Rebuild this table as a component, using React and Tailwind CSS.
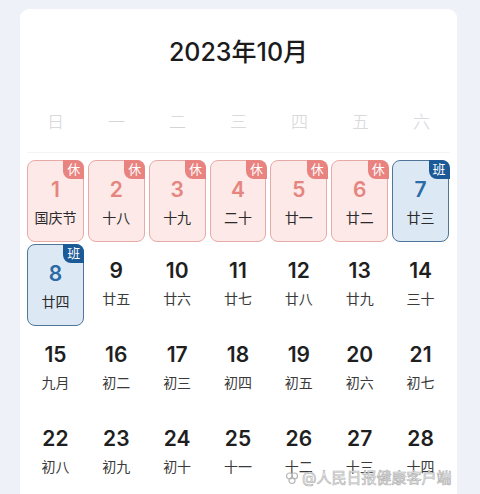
import React from 'react';

const weekdays = ['日', '一', '二', '三', '四', '五', '六'];

// type: rest = 休, work = 班
const days = [
  { d: 1, l: '国庆节', t: 'rest' },
  { d: 2, l: '十八', t: 'rest' },
  { d: 3, l: '十九', t: 'rest' },
  { d: 4, l: '二十', t: 'rest' },
  { d: 5, l: '廿一', t: 'rest' },
  { d: 6, l: '廿二', t: 'rest' },
  { d: 7, l: '廿三', t: 'work' },
  { d: 8, l: '廿四', t: 'work' },
  { d: 9, l: '廿五' },
  { d: 10, l: '廿六' },
  { d: 11, l: '廿七' },
  { d: 12, l: '廿八' },
  { d: 13, l: '廿九' },
  { d: 14, l: '三十' },
  { d: 15, l: '九月' },
  { d: 16, l: '初二' },
  { d: 17, l: '初三' },
  { d: 18, l: '初四' },
  { d: 19, l: '初五' },
  { d: 20, l: '初六' },
  { d: 21, l: '初七' },
  { d: 22, l: '初八' },
  { d: 23, l: '初九' },
  { d: 24, l: '初十' },
  { d: 25, l: '十一' },
  { d: 26, l: '十二' },
  { d: 27, l: '十三' },
  { d: 28, l: '十四' },
];

function DayCell({ day }) {
  if (day.t === 'rest') {
    return (
      <div className="relative h-[82px] rounded-[8px] border-[1.5px] border-[#e8aaa6] bg-[#fde9e7] flex flex-col items-center pt-[15px]">
        <span className="absolute -top-[1.5px] -right-[1.5px] w-[21px] h-[19px] rounded-tr-[8px] rounded-bl-[8px] bg-[#e8837f] text-white text-[13px] leading-[19px] text-center">休</span>
        <span className="text-[21px] leading-[28px] font-semibold text-[#e5857f]">{day.d}</span>
        <span className="mt-[4px] text-[14px] leading-[20px] text-[#2b2b2b]">{day.l}</span>
      </div>
    );
  }
  if (day.t === 'work') {
    return (
      <div className="relative h-[82px] rounded-[8px] border-[1.5px] border-[#4f7699] bg-[#dde8f5] flex flex-col items-center pt-[15px]">
        <span className="absolute -top-[1.5px] -right-[1.5px] w-[21px] h-[19px] rounded-tr-[8px] rounded-bl-[8px] bg-[#1c5a97] text-white text-[13px] leading-[19px] text-center">班</span>
        <span className="text-[21px] leading-[28px] font-semibold text-[#2a6aa5]">{day.d}</span>
        <span className="mt-[4px] text-[14px] leading-[20px] text-[#2b2b2b]">{day.l}</span>
      </div>
    );
  }
  return (
    <div className="h-[82px] flex flex-col items-center pt-[13px]">
      <span className="text-[21px] leading-[28px] font-semibold text-[#1f1f1f]">{day.d}</span>
      <span className="mt-[4px] text-[14px] leading-[20px] text-[#3a3a3a]">{day.l}</span>
    </div>
  );
}

export default function App() {
  return (
    <div
      className="relative w-[480px] h-[494px] overflow-hidden bg-[#eef1f8] pt-[9px] pl-[20px]"
      style={{ fontFamily: 'Inter, "Noto Sans CJK SC", sans-serif' }}
    >
      <div className="w-[437px] h-[520px] bg-white rounded-[9px] pt-[26px] px-[7px]">
        {/* header */}
        <h1 className="text-center text-[25px] leading-[34px] font-medium text-[#1b1b1b]">2023年10月</h1>

        {/* weekdays */}
        <div className="mt-[41px] grid grid-cols-7 gap-x-[4px] pb-[18px] border-b border-[#f4f4f4]">
          {weekdays.map((w) => (
            <div key={w} className="text-center text-[17px] leading-[24px] font-light text-[#d2d4d8]">{w}</div>
          ))}
        </div>

        {/* days */}
        <div className="mt-[7px] w-[422px] grid grid-cols-7 gap-x-[4px] gap-y-[2px]">
          {days.map((day) => (
            <DayCell key={day.d} day={day} />
          ))}
        </div>
      </div>

      {/* watermark */}
      <div className="absolute left-[285px] top-[468px] flex items-center gap-[3px] text-[15px] leading-[20px] text-white [-webkit-text-stroke:0.7px_#b5b5b5]">
        <svg width="14" height="14" viewBox="0 0 14 14" fill="none" stroke="#b5b5b5" strokeWidth="1.2">
          <circle cx="4.5" cy="5" r="3" />
          <circle cx="9.5" cy="5" r="3" />
          <circle cx="7" cy="9.5" r="3" />
        </svg>
        <span>@人民日报健康客户端</span>
      </div>
    </div>
  );
}
